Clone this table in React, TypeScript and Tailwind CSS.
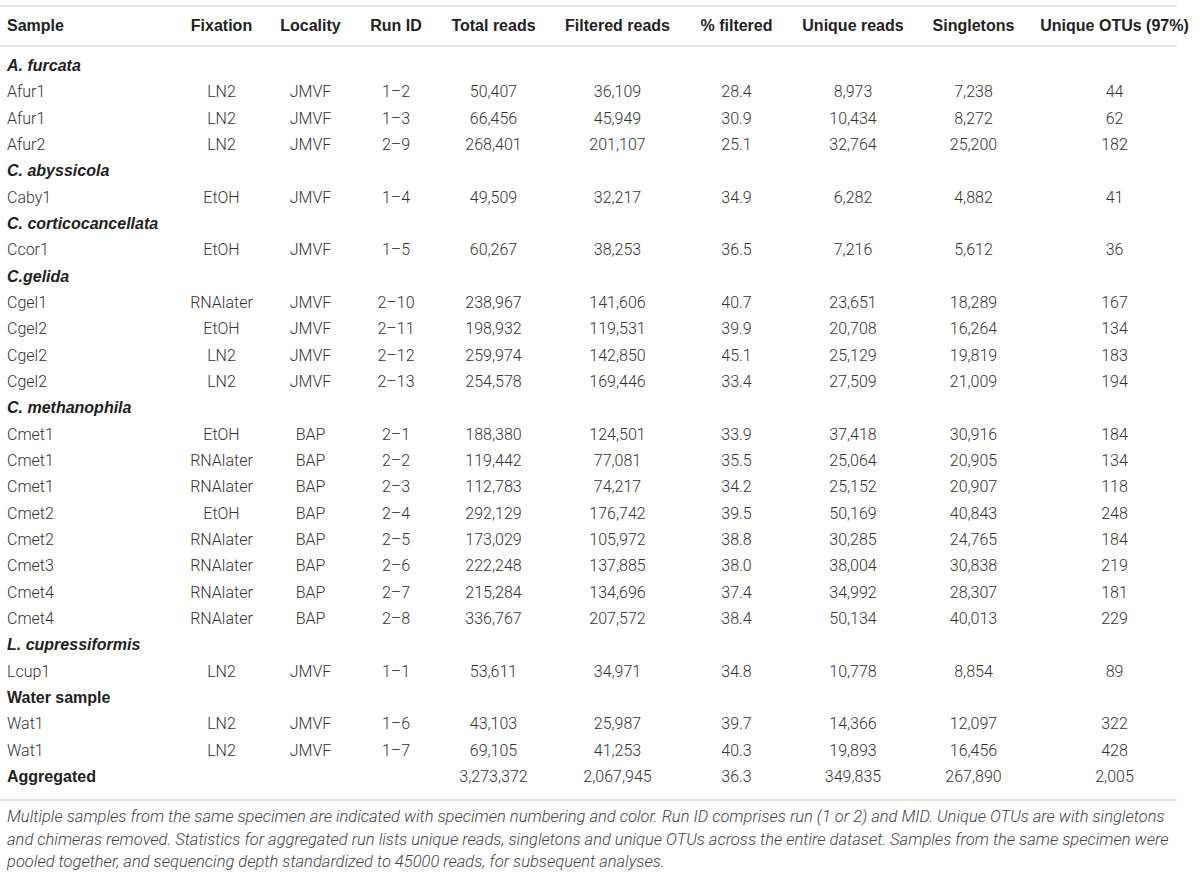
import React from 'react';

type Row = string[];

type Group = {
  title: string;
  italic?: boolean;
  rows: Row[];
};

const columns = [
  'Sample', 'Fixation', 'Locality', 'Run ID', 'Total reads', 'Filtered reads',
  '% filtered', 'Unique reads', 'Singletons', 'Unique OTUs (97%)',
];

const groups: Group[] = [
  {
    title: 'A. furcata', italic: true, rows: [
      ['Afur1', 'LN2', 'JMVF', '1–2', '50,407', '36,109', '28.4', '8,973', '7,238', '44'],
      ['Afur1', 'LN2', 'JMVF', '1–3', '66,456', '45,949', '30.9', '10,434', '8,272', '62'],
      ['Afur2', 'LN2', 'JMVF', '2–9', '268,401', '201,107', '25.1', '32,764', '25,200', '182'],
    ],
  },
  {
    title: 'C. abyssicola', italic: true, rows: [
      ['Caby1', 'EtOH', 'JMVF', '1–4', '49,509', '32,217', '34.9', '6,282', '4,882', '41'],
    ],
  },
  {
    title: 'C. corticocancellata', italic: true, rows: [
      ['Ccor1', 'EtOH', 'JMVF', '1–5', '60,267', '38,253', '36.5', '7,216', '5,612', '36'],
    ],
  },
  {
    title: 'C.gelida', italic: true, rows: [
      ['Cgel1', 'RNAlater', 'JMVF', '2–10', '238,967', '141,606', '40.7', '23,651', '18,289', '167'],
      ['Cgel2', 'EtOH', 'JMVF', '2–11', '198,932', '119,531', '39.9', '20,708', '16,264', '134'],
      ['Cgel2', 'LN2', 'JMVF', '2–12', '259,974', '142,850', '45.1', '25,129', '19,819', '183'],
      ['Cgel2', 'LN2', 'JMVF', '2–13', '254,578', '169,446', '33.4', '27,509', '21,009', '194'],
    ],
  },
  {
    title: 'C. methanophila', italic: true, rows: [
      ['Cmet1', 'EtOH', 'BAP', '2–1', '188,380', '124,501', '33.9', '37,418', '30,916', '184'],
      ['Cmet1', 'RNAlater', 'BAP', '2–2', '119,442', '77,081', '35.5', '25,064', '20,905', '134'],
      ['Cmet1', 'RNAlater', 'BAP', '2–3', '112,783', '74,217', '34.2', '25,152', '20,907', '118'],
      ['Cmet2', 'EtOH', 'BAP', '2–4', '292,129', '176,742', '39.5', '50,169', '40,843', '248'],
      ['Cmet2', 'RNAlater', 'BAP', '2–5', '173,029', '105,972', '38.8', '30,285', '24,765', '184'],
      ['Cmet3', 'RNAlater', 'BAP', '2–6', '222,248', '137,885', '38.0', '38,004', '30,838', '219'],
      ['Cmet4', 'RNAlater', 'BAP', '2–7', '215,284', '134,696', '37.4', '34,992', '28,307', '181'],
      ['Cmet4', 'RNAlater', 'BAP', '2–8', '336,767', '207,572', '38.4', '50,134', '40,013', '229'],
    ],
  },
  {
    title: 'L. cupressiformis', italic: true, rows: [
      ['Lcup1', 'LN2', 'JMVF', '1–1', '53,611', '34,971', '34.8', '10,778', '8,854', '89'],
    ],
  },
  {
    title: 'Water sample', rows: [
      ['Wat1', 'LN2', 'JMVF', '1–6', '43,103', '25,987', '39.7', '14,366', '12,097', '322'],
      ['Wat1', 'LN2', 'JMVF', '1–7', '69,105', '41,253', '40.3', '19,893', '16,456', '428'],
    ],
  },
];

const totals = ['', '', '', '3,273,372', '2,067,945', '36.3', '349,835', '267,890', '2,005'];

const gridCols = 'grid grid-cols-[177px_89px_89px_82px_113px_135px_103px_130px_111px_171px]';

const DataRow = ({ row }: { row: Row }) => (
  <div className={`${gridCols} h-[26.33px] items-center`}>
    {row.map((cell, i) => (
      <div key={i} className={i === 0 ? 'pl-[7px]' : 'text-center'}>{cell}</div>
    ))}
  </div>
);

const App = () => {
  return (
    <div className="w-[1200px] bg-white pt-[5px] text-[16px] text-[#333]" style={{ fontFamily: 'Roboto, "Liberation Sans", sans-serif' }}>
      <div className="w-[1177px] h-[2px] bg-[#e6e6e6]" />
      <div
        className={`${gridCols} h-[38px] items-center font-bold text-[#222] whitespace-nowrap`}
        style={{ fontFamily: '"Liberation Sans", Arial, sans-serif' }}
      >
        {columns.map((col, i) => (
          <div key={col} className={i === 0 ? 'pl-[7px]' : 'text-center'}>{col}</div>
        ))}
      </div>
      <div className="w-[1177px] h-[2px] bg-[#e6e6e6]" />

      <div className="pt-[6px] pb-[9px] font-light">
        {groups.map((group) => (
          <React.Fragment key={group.title}>
            <div
              className={`h-[26.33px] flex items-center pl-[7px] font-bold text-[#222] ${group.italic ? 'italic' : ''}`}
              style={{ fontFamily: '"Liberation Sans", Arial, sans-serif' }}
            >
              {group.title}
            </div>
            {group.rows.map((row, i) => (
              <DataRow key={i} row={row} />
            ))}
          </React.Fragment>
        ))}
        <div className={`${gridCols} h-[26.33px] items-center`}>
          <div className="pl-[7px] font-bold text-[#222]" style={{ fontFamily: '"Liberation Sans", Arial, sans-serif' }}>
            Aggregated
          </div>
          {totals.map((cell, i) => (
            <div key={i} className="text-center">{cell}</div>
          ))}
        </div>
      </div>

      <div className="w-[1177px] h-[2px] bg-[#e6e6e6]" />
      <p className="w-[1177px] pl-[7px] pt-[5px] text-[16.5px] leading-[22.5px] italic font-light text-[#444] whitespace-nowrap">
        Multiple samples from the same specimen are indicated with specimen numbering and color. Run ID comprises run (1 or 2) and MID. Unique OTUs are with singletons<br />
        and chimeras removed. Statistics for aggregated run lists unique reads, singletons and unique OTUs across the entire dataset. Samples from the same specimen were<br />
        pooled together, and sequencing depth standardized to 45000 reads, for subsequent analyses.
      </p>
    </div>
  );
};

export default App;
